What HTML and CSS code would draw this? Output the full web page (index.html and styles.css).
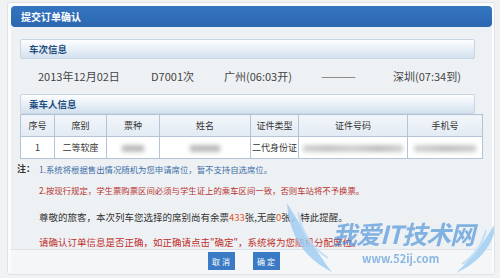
FILE: index.html
```html
<!DOCTYPE html>
<html lang="zh-CN">
  <head>
    <meta charset="UTF-8" />
    <title>提交订单确认</title>
    <link rel="stylesheet" href="styles.css">
  </head>
  <body>
    <div class="dialog">
      <div class="dialog-title">提交订单确认</div>
      <div class="dialog-body">
        <div class="section-head">车次信息</div>
        <div class="train-row">
          <span class="t-date">2013年12月02日</span>
          <span class="t-no">D7001次</span>
          <span class="t-from">广州(06:03开)</span>
          <span class="t-dash">————</span>
          <span class="t-to">深圳(07:34到)</span>
        </div>
        <div class="section-head">乘车人信息</div>
        <table class="passengers">
          <thead>
            <tr>
              <th class="c1">序号</th>
              <th class="c2">席别</th>
              <th class="c3">票种</th>
              <th class="c4">姓名</th>
              <th class="c5">证件类型</th>
              <th class="c6">证件号码</th>
              <th class="c7">手机号</th>
            </tr>
          </thead>
          <tbody>
            <tr>
              <td>1</td>
              <td>二等软座</td>
              <td><span class="blur short"></span></td>
              <td><span class="blur mid"></span></td>
              <td>二代身份证</td>
              <td><span class="blur long"></span></td>
              <td><span class="blur phone"></span></td>
            </tr>
          </tbody>
        </table>
        <div class="notes">
          <div class="note note-blue"><span class="note-mark">注：</span>1.系统将根据售出情况随机为您申请席位，暂不支持自选席位。</div>
          <div class="note note-red">2.按现行规定，学生票购票区间必须与学生证上的乘车区间一致，否则车站将不予换票。</div>
          <div class="remind">尊敬的旅客，本次列车您选择的席别尚有余票<em>433</em>张,无座<em>0</em>张，特此提醒。</div>
          <div class="confirm">请确认订单信息是否正确，如正确请点击"确定"，系统将为您随机分配席位。</div>
        </div>
      </div>
      <div class="dialog-foot">
        <button class="btn">取 消</button>
        <button class="btn">确 定</button>
      </div>

      <div class="watermark">
        <svg class="wings" width="220" height="85" viewBox="0 0 220 85">
          <path d="M7 13 C9 45 24 68 52 82 C38 64 26 44 7 13 Z" fill="#a2cef2"/>
          <path d="M18 22 C22 44 32 58 48 68" fill="none" stroke="#bcdcf5" stroke-width="2"/>
          <path d="M217 30 C214 55 200 72 176 83 C194 66 205 52 217 30 Z" fill="#a2cef2"/>
          <path d="M206 40 C202 56 194 66 182 74" fill="none" stroke="#bcdcf5" stroke-width="2"/>
        </svg>
        <div class="wm-name">我爱IT技术网</div>
        <div class="wm-url">www.52ij.com</div>
      </div>
    </div>
  </body>
</html>
```

FILE: styles.css
```css
body {
  margin: 0;
  background-color: #f1f2f4;
  font-family: "Noto Sans CJK SC", "DejaVu Sans", sans-serif;
  color: #333;
}

.dialog {
  position: relative;
  margin: 2px 6px 0 7px;
  width: 481px;
  height: 266px;
  padding: 3px 2px 2px 3px;
  background-color: #fbfcfd;
  border: 1px solid #dfe3e8;
  border-radius: 3px;
  overflow: hidden;
}

.dialog-title {
  height: 21px;
  line-height: 21px;
  padding-left: 10px;
  background: linear-gradient(#3575c0, #2c67b0);
  border-radius: 4px;
  color: #fff;
  font-size: 10px;
  font-weight: bold;
}

.dialog-body {
  background-color: #eef1f4;
  padding: 12px 17px 0 9px;
  height: 210px;
}

.section-head {
  height: 18px;
  line-height: 18px;
  padding-left: 8px;
  border: 1px solid #c8d6e4;
  border-radius: 2px;
  background: linear-gradient(#fdfeff, #d3e1ee);
  color: #1f4f82;
  font-size: 9.5px;
  font-weight: bold;
}

.train-row {
  display: flex;
  height: 35px;
  line-height: 35px;
  padding-left: 18px;
  font-size: 11px;
  color: #444;
}

.t-date {
  width: 113px;
}

.t-no {
  width: 73px;
}

.t-from {
  width: 97px;
}

.t-dash {
  width: 72px;
  color: #777;
  letter-spacing: -2px;
}

.passengers {
  width: 455px;
  border-collapse: collapse;
  table-layout: fixed;
  font-size: 9px;
}

.passengers th,
.passengers td {
  border: 1px solid #b3c4d6;
  text-align: center;
  padding: 0;
  height: 21px;
  font-weight: normal;
  white-space: nowrap;
  overflow: hidden;
}

.passengers th {
  background: linear-gradient(#f2f6fa, #e2eaf3);
  color: #333;
}

.passengers td {
  background-color: #fff;
}

.c1 { width: 33px; }
.c2 { width: 51px; }
.c3 { width: 52px; }
.c4 { width: 90px; }
.c5 { width: 47px; }
.c6 { width: 108px; }
.c7 { width: 74px; }

.blur {
  display: inline-block;
  height: 7px;
  vertical-align: middle;
  background-color: #bcbcbc;
  filter: blur(2px);
}

.blur.short { width: 22px; }
.blur.mid { width: 30px; }
.blur.long { width: 100px; background: linear-gradient(90deg, #d2d2d2, #c2c2c2, #d0d0d0, #bdbdbd, #cfcfcf); }
.blur.phone { width: 62px; background: linear-gradient(90deg, #d4d4d4, #bfbfbf, #cdcdcd); }

.notes {
  font-size: 8.4px;
  margin-left: 19px;
}

.note {
  position: relative;
  height: 20px;
  line-height: 20px;
}

.note-mark {
  position: absolute;
  left: -22px;
  color: #333;
  font-size: 9px;
  font-weight: bold;
}

.note-blue {
  color: #3d6fa6;
}

.note-red {
  height: 22px;
  line-height: 22px;
  color: #b8322f;
}

.remind {
  margin-top: 5px;
  height: 22px;
  line-height: 22px;
  font-size: 9.5px;
  color: #333;
}

.remind em {
  font-style: normal;
  color: #e0572c;
}

.confirm {
  margin-top: 5px;
  line-height: 18px;
  font-size: 9.5px;
  color: #c0302b;
}

.dialog-foot {
  display: flex;
  justify-content: center;
  gap: 18px;
  padding: 2px 16px 0 0;
  border-top: 1px solid #dde2e8;
  background-color: #f4f6f8;
  height: 30px;
}

.btn {
  width: 27px;
  height: 18px;
  padding: 0;
  border: none;
  background-color: #3b7bc6;
  color: #fff;
  font-family: inherit;
  font-size: 8px;
  white-space: nowrap;
}

/* site watermark stamped over the screenshot */
.watermark {
  position: absolute;
  left: 272px;
  top: 187px;
  width: 220px;
  height: 85px;
  opacity: 0.85;
  pointer-events: none;
}

.wings {
  position: absolute;
  left: 0;
  top: 0;
}

.wm-name {
  position: absolute;
  left: 52px;
  top: 30px;
  line-height: 26px;
  font-size: 25px;
  font-weight: bold;
  font-style: italic;
  color: rgba(66, 140, 214, 0.75);
  letter-spacing: -1px;
  white-space: nowrap;
}

.wm-url {
  position: absolute;
  left: 82px;
  top: 63px;
  line-height: 11px;
  font-size: 11px;
  font-weight: bold;
  color: rgba(66, 140, 214, 0.7);
}
```
